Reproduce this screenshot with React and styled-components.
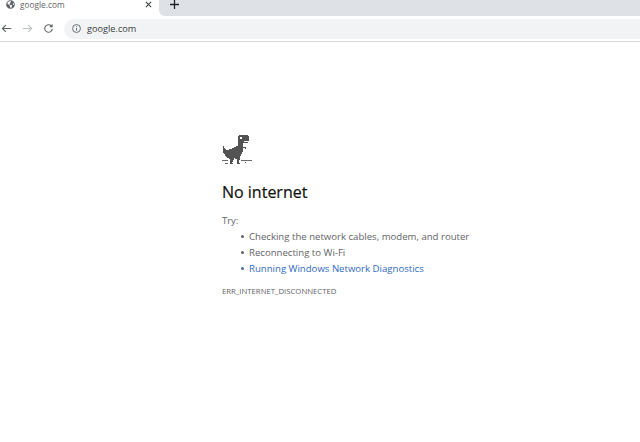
import React from "react"
import styled, { createGlobalStyle } from "styled-components"
import { FaGlobeAmericas } from "react-icons/fa"

const GlobalStyle = createGlobalStyle`
  html, body {
    margin: 0;
    background: #fff;
    font-family: "Open Sans", "Noto Sans", sans-serif;
  }
`

const Page = styled.div`
  width: 640px;
  height: 442px;
  overflow: hidden;
`
const TabStrip = styled.div`
  display: flex;
  height: 16px;
  background: #fff;
`
const Tab = styled.div`
  width: 159px;
  display: flex;
  align-items: center;
  padding: 0 0 7px 6px;
  box-sizing: border-box;
  gap: 5px;
  color: #5f6368;
  font-size: 8.3px;
`
const TabTitle = styled.span`
  flex: 1;
`
const CloseMark = styled.svg`
  width: 7px;
  height: 7px;
  margin-right: 7px;
`
const TabRest = styled.div`
  flex: 1;
  background: #dee1e6;
  border-bottom-left-radius: 6px;
  display: flex;
  align-items: center;
  padding: 0 0 7px 11px;
`
const Toolbar = styled.div`
  height: 25px;
  display: flex;
  align-items: center;
  padding: 0 0 0 1px;
  box-sizing: border-box;
`
const NavButton = styled.svg`
  width: 11px;
  height: 11px;
  margin-right: 10px;
  flex: none;
`
const Omnibox = styled.div`
  flex: 1;
  height: 20px;
  background: #f1f3f4;
  border-radius: 10px 0 0 10px;
  display: flex;
  align-items: center;
  padding-left: 8px;
  gap: 6px;
  color: #3c4043;
  font-size: 9.2px;
`
const Divider = styled.div`
  height: 1px;
  background: #d9dadc;
`
const Main = styled.main`
  padding: 93px 0 0 222px;
`
const Dino = styled.svg`
  display: block;
  width: 30px;
  height: 30px;
`
const Heading = styled.h1`
  margin: 16px 0 0;
  font-size: 16px;
  line-height: 22px;
  font-weight: 400;
  color: #111;
  -webkit-text-stroke: 0.2px #111;
`
const TryLabel = styled.div`
  margin-top: 10px;
  font-size: 9.5px;
  line-height: 16px;
  color: #5f6368;
`
const Suggestions = styled.ul`
  list-style: none;
  margin: 0;
  padding: 0 0 0 27px;
`
const Suggestion = styled.li`
  position: relative;
  font-size: 9.6px;
  line-height: 16px;
  color: ${p => (p.$link ? "#2f6bc4" : "#5f6368")};

  &::before {
    content: "";
    position: absolute;
    left: -8px;
    top: 6px;
    width: 3px;
    height: 3px;
    border-radius: 50%;
    background: ${p => (p.$link ? "#4a6a9a" : "#5f6368")};
  }
`
const ErrorCode = styled.div`
  margin-top: 8px;
  font-size: 7.75px;
  line-height: 12px;
  color: #5f6368;
`

const Arrow = ({ color, flip }) => (
  <NavButton viewBox="0 0 16 16">
    <path
      d={flip ? "M1 8h13M9 3l5 5-5 5" : "M15 8H2M7 3L2 8l5 5"}
      fill="none"
      stroke={color}
      strokeWidth="1.7"
    />
  </NavButton>
)

const DinoDrawing = () => (
  <Dino viewBox="0 0 30 30">
    <path
      fill="#6b6b6b"
      d="M0 25h6v1H0zM19 25h11v1H19zM3 28h3v1H3zM23 27h1v1h-1z"
    />
    <path
      fill="#535353"
      d="M17 0H26V1H27V6H22V7H26V8H21V12H24V14H23V13H21V17H20V19H19V21H18V25H17V28H18V29H15V24H13V23H12V25H11V27H10V28H11V29H8V24H7V23H5V22H4V21H3V19H2V18H1V11H2V13H3V14H4V15H7V14H10V13H12V12H14V11H16V1H17Z"
    />
    <rect x="18" y="2" width="2" height="2" fill="#fff" />
  </Dino>
)

export default function App() {
  return (
    <Page>
      <GlobalStyle />
      <TabStrip>
        <Tab>
          <FaGlobeAmericas size={9} color="#5f6368" />
          <TabTitle>google.com</TabTitle>
          <CloseMark viewBox="0 0 8 8">
            <path d="M1 1l6 6M7 1L1 7" stroke="#3c4043" strokeWidth="1.2" />
          </CloseMark>
        </Tab>
        <TabRest>
          <svg width="9" height="9" viewBox="0 0 9 9">
            <path d="M4.5 0v9M0 4.5h9" stroke="#202124" strokeWidth="1.3" />
          </svg>
        </TabRest>
      </TabStrip>
      <Toolbar>
        <Arrow color="#5f6368" />
        <Arrow color="#bdc1c6" flip />
        <NavButton viewBox="0 0 16 16">
          <path d="M13.5 8.5A5.5 5.5 0 1 1 11.8 4" fill="none" stroke="#5f6368" strokeWidth="1.6" />
          <path d="M14 1v5H9z" fill="#5f6368" />
        </NavButton>
        <Omnibox>
          <svg width="9" height="9" viewBox="0 0 10 10">
            <circle cx="5" cy="5" r="4.4" fill="none" stroke="#5f6368" />
            <path d="M5 4.4v3M5 2.4v1" stroke="#5f6368" />
          </svg>
          google.com
        </Omnibox>
      </Toolbar>
      <Divider />
      <Main>
        <DinoDrawing />
        <Heading>No internet</Heading>
        <TryLabel>Try:</TryLabel>
        <Suggestions>
          <Suggestion>Checking the network cables, modem, and router</Suggestion>
          <Suggestion>Reconnecting to Wi-Fi</Suggestion>
          <Suggestion $link>Running Windows Network Diagnostics</Suggestion>
        </Suggestions>
        <ErrorCode>ERR_INTERNET_DISCONNECTED</ErrorCode>
      </Main>
    </Page>
  )
}
